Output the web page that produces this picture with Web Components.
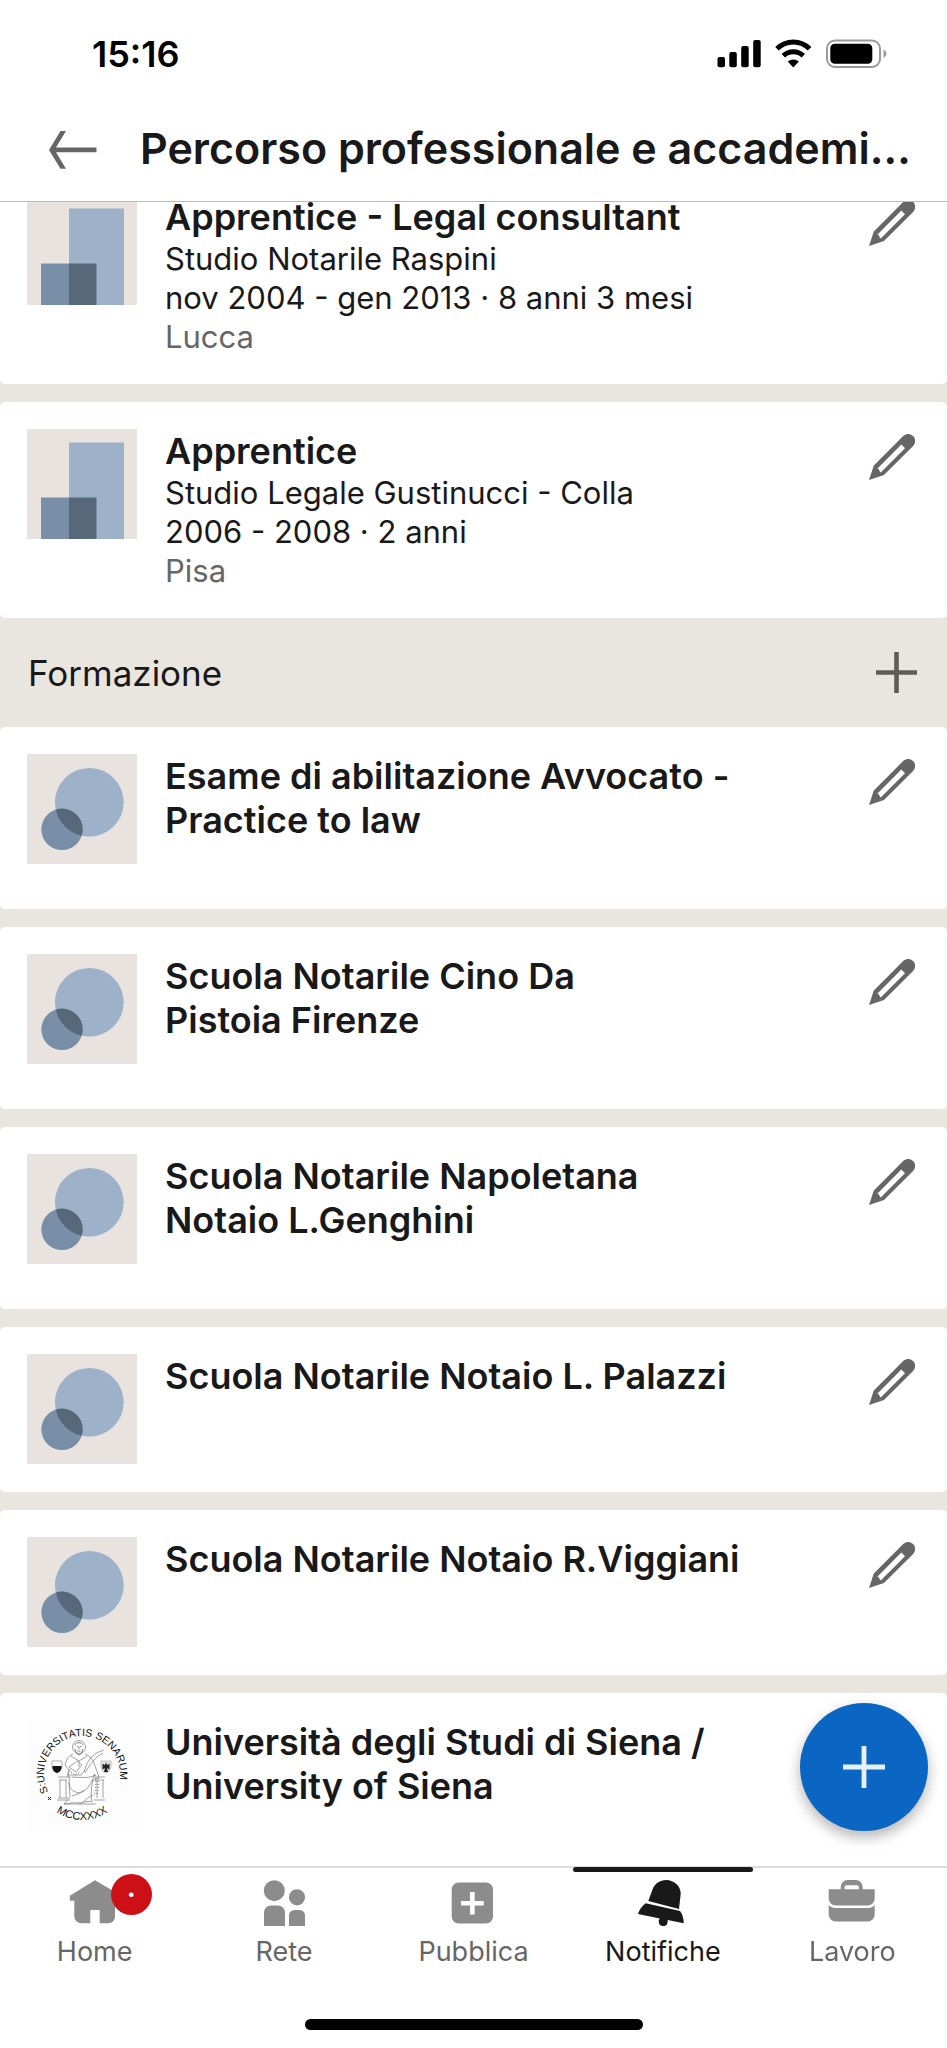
<!DOCTYPE html>
<html lang="it">
<head>
<meta charset="utf-8">
<meta name="viewport" content="width=device-width, initial-scale=1">
<title>Percorso professionale e accademico</title>
<style>
  body {
    margin: 0;
    font-family: Inter, "Liberation Sans", sans-serif;
    color: #191919;
    background: #fff;
  }
</style>
</head>
<body>

<profile-screen>
  <status-bar slot="top" time="15:16"></status-bar>
  <title-bar slot="top">Percorso professionale e accademi…</title-bar>

  <entry-card logo="company">
    Apprentice - Legal consultant
    <span slot="line">Studio Notarile Raspini</span>
    <span slot="line">nov 2004 - gen 2013 · 8 anni 3 mesi</span>
    <span slot="place">Lucca</span>
  </entry-card>
  <entry-card logo="company">
    Apprentice
    <span slot="line">Studio Legale Gustinucci - Colla</span>
    <span slot="line">2006 - 2008 · 2 anni</span>
    <span slot="place">Pisa</span>
  </entry-card>

  <section-header>Formazione</section-header>

  <entry-card logo="school">Esame di abilitazione Avvocato -<br>Practice to law</entry-card>
  <entry-card logo="school">Scuola Notarile Cino Da<br>Pistoia Firenze</entry-card>
  <entry-card logo="school">Scuola Notarile Napoletana<br>Notaio L.Genghini</entry-card>
  <entry-card logo="school">Scuola Notarile Notaio L. Palazzi</entry-card>
  <entry-card logo="school">Scuola Notarile Notaio R.Viggiani</entry-card>
  <entry-card logo="seal">Università degli Studi di Siena /<br>University of Siena</entry-card>

  <add-button slot="float"></add-button>

  <tab-bar slot="bottom">
    <tab-item icon="home" badge="·">Home</tab-item>
    <tab-item icon="network">Rete</tab-item>
    <tab-item icon="post">Pubblica</tab-item>
    <tab-item icon="bell" active>Notifiche</tab-item>
    <tab-item icon="jobs">Lavoro</tab-item>
  </tab-bar>
</profile-screen>

<script>
const LOGOS = {
  company: `
    <svg viewBox="0 0 110 110" aria-hidden="true">
      <path fill="#e8e3df" d="M0 0h110v110H0z"/>
      <path fill="#9db2c9" d="M42 13.5h55V110H42z"/>
      <path fill="#788fa7" d="M14 68.5h28V110H14z"/>
      <path fill="#56687a" d="M42 68.5h27.5V110H42z"/>
    </svg>`,
  school: `
    <svg viewBox="0 0 110 110" aria-hidden="true">
      <clipPath id="big"><circle cx="62.3" cy="48.3" r="34.4"/></clipPath>
      <path fill="#e8e3df" d="M0 0h110v110H0z"/>
      <circle cx="62.3" cy="48.3" r="34.4" fill="#9db2c9"/>
      <circle cx="35" cy="75.3" r="20.7" fill="#788fa7"/>
      <circle cx="35" cy="75.3" r="20.7" fill="#56687a" clip-path="url(#big)"/>
    </svg>`,
  seal: `
    <svg viewBox="0 0 110 110" aria-hidden="true">
      <path fill="#fdfdfd" d="M0 0h110v110H0z"/>
      <path id="ring" fill="none" d="M21.4 71.8A38 38 0 1 1 81.9 80.9"/>
      <path id="foot" fill="none" d="M19.8 83.6A46 46 0 0 0 90.2 83.6"/>
      <g font-family="Liberation Sans, sans-serif" fill="#111">
        <text font-size="10.500"><textPath href="#ring">S:UNIVERSITATIS SENARUM</textPath></text>
        <text font-size="11" text-anchor="middle"><textPath href="#foot" startOffset="50%">MCCXXXX</textPath></text>
      </g>
      <path d="M21 77l3 3m0-3l-3 3" stroke="#222" fill="none"/>
      <!-- shields -->
      <path d="M25 41h10v6q-1 5-5 6q-4-1-5-6z" fill="#fff" stroke="#888" stroke-width=".7"/>
      <path d="M25.500 46h9v2q-1 4-4.500 5q-3.500-1-4.500-5z" fill="#111"/>
      <path d="M74 41h10v6q-1 5-5 6q-4-1-5-6z" fill="#e8e8e8" stroke="#aaa" stroke-width=".7"/>
      <path d="M79 42l1 3 2.500-1.500v6l-2.500-1.500 1 4h-4l1-4-2.500 1.500v-6L78 45z" fill="#222"/>
      <!-- enthroned figure -->
      <g fill="none" stroke="#8a8a8a" stroke-width=".8">
        <circle cx="52" cy="27" r="6.500"/>
        <path d="M47.500 25q4.500-5 9 0M48 29q1 6 4 6t4-6M50 26.500h1.500M53 26.500h1.500M52 27v2M50.500 31h3" stroke="#666"/>
        <path d="M46 34q-6 2-8 11l4 5-1 8M58 34q8 3 10 12l4 11-6 4M44 36l8 5 8-5M52 41v6"/>
        <path d="M42 47l7 5 6-7-5-4-8 6M43 49l-3 6h14l4-5M57 52q4-18 20-22M58 53q8-15 18-20"/>
        <path d="M31 57h11M32 60h8M33 60v18M39 60v18M30 80h13M31 78h10M66 57h12M68 60h9M70 60v18M76 60v18M67 80h11"/>
        <path d="M43 56q-4 14 8 17 10 0 17-19M45 57q22 2 23-3M42 62l1 15-6 7q10-2 18-1 6-6 11-8M66 59q-3 14-1 23-5-2-13 2M37 84h32M45 76q8-2 12-6"/>
      </g>
      <path d="M68 55q2 10-1 21M71 58q1 9-1 17M44 52l4 3 5-3" fill="none" stroke="#555" stroke-width="1" stroke-dasharray="1 2"/>
    </svg>`
};

const TAB_ICONS = {
  home: `<path d="M28 2.300L48 14v25a6.500 6.500 0 0 1-6.500 6.300h-8.800V32h-9.400v13.300h-9A7 7 0 0 1 7.300 38.500V22.700H2.800v-5z"/>`,
  network: `
    <circle cx="18.300" cy="12.700" r="10.500"/><circle cx="41" cy="19.300" r="8.100"/>
    <path d="M8 48V34.500a7 7 0 0 1 7-7h7a7 7 0 0 1 7 7V48zM33 48V37.500a5.500 5.500 0 0 1 5.500-5.500h5a5.500 5.500 0 0 1 5.500 5.500V48z"/>`,
  post: `
    <rect x="6.700" y="4.500" width="41.300" height="41" rx="7"/>
    <path fill="#fff" d="M25 14h4.700v9h9v4.600h-9v9H25v-9h-9V23h9z"/>`,
  bell: `
    <path d="M13.300 23l4.200-11.500C19.800 5.400 25 2 31 2c8.500 0 14.900 6.600 14.700 14L44 31z"/>
    <path d="M10.700 25.300L45 33q3.800 5 3.700 12.300l-16-3.200q.4 5.900-4.400 6-4.900-.2-4.600-5.500l1-2.200L3 36q2-6.500 7.700-10.700z"/>`,
  jobs: `
    <path fill-rule="evenodd" d="M16.700 11.300V9a7 7 0 0 1 7-7h8a7 7 0 0 1 7 7v2.300h12v9.200a7 7 0 0 1-7 7h-32a7 7 0 0 1-7-7v-9.200zM20.500 11.300h14.400V9.500a2.200 2.200 0 0 0-2.200-2.200h-10a2.200 2.200 0 0 0-2.200 2.200z"/>
    <path d="M4.700 27q2.500 3 7 3h32q4.500 0 7-3v9.500a7 7 0 0 1-7 7h-32a7 7 0 0 1-7-7z"/>`
};

class BaseElement extends HTMLElement {
  render(html) {
    this.attachShadow({ mode: 'open' }).innerHTML = html;
  }
}

class ProfileScreen extends BaseElement {
  constructor() {
    super();
    this.render(`
      <style>
        :host {
          display: flex;
          flex-direction: column;
          height: 100vh;
        }
        header, footer { flex: none; }
        .body {
          flex: 1;
          min-height: 0;
          display: grid;
          position: relative;
        }
        main {
          overflow-y: auto;
          scrollbar-width: none;
          background: #e9e5df;
          display: flex;
          flex-direction: column;
          gap: 18px;
        }
        main::after {
          content: "";
          flex: none;
          height: 128px;
        }
        .float {
          position: absolute;
          right: 19px;
          bottom: 35px;
        }
      </style>
      <header><slot name="top"></slot></header>
      <div class="body">
        <main><slot></slot></main>
        <div class="float"><slot name="float"></slot></div>
      </div>
      <footer><slot name="bottom"></slot></footer>
    `);
  }

  scrollList(top) {
    this.shadowRoot.querySelector('main').scrollTop = top;
  }
}

class StatusBar extends BaseElement {
  connectedCallback() {
    this.render(`
      <style>
        :host {
          display: flex;
          align-items: center;
          justify-content: space-between;
          box-sizing: border-box;
          height: 99px;
          padding: 9px 60px 0 92px;
          color: #000;
        }
        time {
          font-size: 36px;
          font-weight: 600;
        }
        svg { display: block; }
      </style>
      <time>${this.getAttribute('time')}</time>
      <svg width="170" height="30" viewBox="0 0 170 30" role="img" aria-label="Segnale, Wi-Fi, batteria">
        <rect x=".500" y="18" width="7.500" height="10.300" rx="2"/>
        <rect x="12.300" y="13" width="7.500" height="15.300" rx="2"/>
        <rect x="24.200" y="7" width="7.500" height="21.300" rx="2"/>
        <rect x="36.200" y="1" width="7.500" height="27.300" rx="2"/>
        <g fill="none" stroke="#000" stroke-width="5">
          <path d="M60 9.800a23 23 0 0 1 32.600 0"/>
          <path d="M66.300 16.800a14.500 14.500 0 0 1 20 0"/>
        </g>
        <path d="M70.700 22.500a8.500 8.500 0 0 1 11.200 0l-5.600 6z"/>
        <rect x="110" y="1.500" width="53" height="26.500" rx="8" fill="none" stroke="#999" stroke-width="2"/>
        <rect x="113.300" y="4.800" width="42" height="20" rx="4.500"/>
        <path fill="#999" d="M166.500 10.500q3 1.500 3 4.200t-3 4.200z"/>
      </svg>
    `);
  }
}

class TitleBar extends BaseElement {
  constructor() {
    super();
    this.render(`
      <style>
        :host {
          display: flex;
          align-items: center;
          gap: 42px;
          height: 102px;
          padding: 0 32px 0 48px;
          border-bottom: 1px solid #bbb;
        }
        button {
          flex: none;
          border: 0;
          padding: 0;
          background: none;
          color: #666;
        }
        svg { display: block; }
        h1 {
          margin: 0;
          padding-bottom: 4px;
          font-size: 43px;
          font-weight: 600;
          line-height: 52px;
          white-space: nowrap;
        }
      </style>
      <button aria-label="Indietro">
        <svg width="50" height="38" viewBox="0 0 50 38" fill="currentColor">
          <path d="M12.500 0h5.500L8 16.600h40.500v4.600H8l10 16.600h-5.500L1 19z"/>
        </svg>
      </button>
      <h1><slot></slot></h1>
    `);
  }
}

class SectionHeader extends BaseElement {
  constructor() {
    super();
    this.render(`
      <style>
        :host {
          flex: none;
          display: flex;
          align-items: center;
          justify-content: space-between;
          height: 109px;
          margin: -18px 0;
          padding: 0 30px 0 28px;
        }
        h2 {
          margin: 0;
          font-size: 35px;
          font-weight: 400;
          line-height: 44px;
        }
        button {
          border: 0;
          padding: 0;
          background: none;
          color: #5f5b56;
        }
        svg { display: block; }
      </style>
      <h2><slot></slot></h2>
      <button aria-label="Aggiungi formazione">
        <svg width="41" height="41" viewBox="0 0 41 41" fill="currentColor">
          <path d="M18.200 0h4.600v18.200H41v4.600H22.800V41h-4.600V22.800H0v-4.600h18.200z"/>
        </svg>
      </button>
    `);
  }
}

class EntryCard extends BaseElement {
  connectedCallback() {
    this.render(`
      <style>
        :host {
          flex: none;
          display: flex;
          align-items: flex-start;
          gap: 28px;
          padding: 27px 32px 28px 27px;
          background: #fff;
          border-radius: 5px;
        }
        .logo {
          flex: none;
          width: 110px;
          height: 110px;
        }
        .logo svg { display: block; width: 100%; }
        .text { flex: 1; min-width: 0; }
        h3 {
          margin: 0;
          font-size: 36px;
          font-weight: 600;
          line-height: 44px;
        }
        .lines {
          min-height: 39px;
          font-size: 31px;
          line-height: 39px;
        }
        ::slotted([slot]) { display: block; }
        ::slotted([slot="place"]) { color: #666; }
        button {
          flex: none;
          border: 0;
          padding: 5px 0 0;
          background: none;
          color: #666;
        }
        button svg { display: block; }
      </style>
      <div class="logo">${LOGOS[this.getAttribute('logo')]}</div>
      <div class="text">
        <h3><slot></slot></h3>
        <div class="lines">
          <slot name="line"></slot>
          <slot name="place"></slot>
        </div>
      </div>
      ${this.getAttribute('logo') === 'seal' ? '' : `
      <button aria-label="Modifica">
        <svg width="46" height="46" viewBox="0 0 46 46" fill="currentColor">
          <path fill-rule="evenodd" d="M0 46L4.800 31.500 34.200 2a7 7 0 0 1 9.900 9.900L15 41zM8.300 34.700l1.600.6.600 1.700 1.200 1.400L36 14.200 32.400 10.600z"/>
        </svg>
      </button>`}
    `);
  }
}

class AddButton extends BaseElement {
  constructor() {
    super();
    this.render(`
      <style>
        :host { display: block; }
        button {
          display: grid;
          place-items: center;
          width: 128px;
          height: 128px;
          padding: 0;
          border: 0;
          border-radius: 50%;
          background: #0a66c2;
          color: #e7f1fb;
          box-shadow: 0 6px 14px rgba(0, 0, 0, 0.3);
        }
      </style>
      <button aria-label="Aggiungi">
        <svg width="42" height="42" viewBox="0 0 42 42" fill="currentColor">
          <path d="M18.600 0h4.800v18.600H42v4.800H23.400V42h-4.800V23.400H0v-4.800h18.600z"/>
        </svg>
      </button>
    `);
  }
}

class TabBar extends BaseElement {
  constructor() {
    super();
    this.render(`
      <style>
        :host {
          display: block;
          border-top: 2px solid #ddd;
          background: #fff;
        }
        nav {
          display: grid;
          grid-auto-flow: column;
          grid-auto-columns: 1fr;
        }
        .home-indicator {
          width: 338px;
          height: 11px;
          margin: 51px auto 18px;
          border-radius: 6px;
          background: #000;
        }
      </style>
      <nav><slot></slot></nav>
      <div class="home-indicator"></div>
    `);
  }
}

class TabItem extends BaseElement {
  connectedCallback() {
    const badge = this.getAttribute('badge');
    this.render(`
      <style>
        :host { display: block; color: #666; }
        :host([active]) { color: #191919; }
        a {
          display: flex;
          flex-direction: column;
          align-items: center;
          position: relative;
          padding-top: 10px;
          color: inherit;
          text-decoration: none;
          font-size: 27px;
          line-height: 32px;
        }
        .icon { position: relative; margin-bottom: 10px; }
        svg { display: block; fill: #8c8c8c; }
        :host([active]) svg { fill: #191919; }
        :host([active]) a::before {
          content: "";
          position: absolute;
          top: -1px;
          left: 5px;
          right: 5px;
          height: 5px;
          border-radius: 3px;
          background: #191919;
        }
        .badge {
          position: absolute;
          left: 44px;
          top: -4px;
          width: 41px;
          height: 41px;
          border-radius: 50%;
          background: #cc1016;
          color: #fff;
          font-weight: 700;
          line-height: 41px;
          text-align: center;
        }
      </style>
      <a href="#">
        <span class="icon">
          <svg width="56" height="48" viewBox="0 0 56 48">${TAB_ICONS[this.getAttribute('icon')]}</svg>
          ${badge ? `<span class="badge">${badge}</span>` : ''}
        </span>
        <slot></slot>
      </a>
    `);
  }
}

customElements.define('profile-screen', ProfileScreen);
customElements.define('status-bar', StatusBar);
customElements.define('title-bar', TitleBar);
customElements.define('section-header', SectionHeader);
customElements.define('entry-card', EntryCard);
customElements.define('add-button', AddButton);
customElements.define('tab-bar', TabBar);
customElements.define('tab-item', TabItem);

document.querySelector('profile-screen').scrollList(34);
</script>
</body>
</html>
